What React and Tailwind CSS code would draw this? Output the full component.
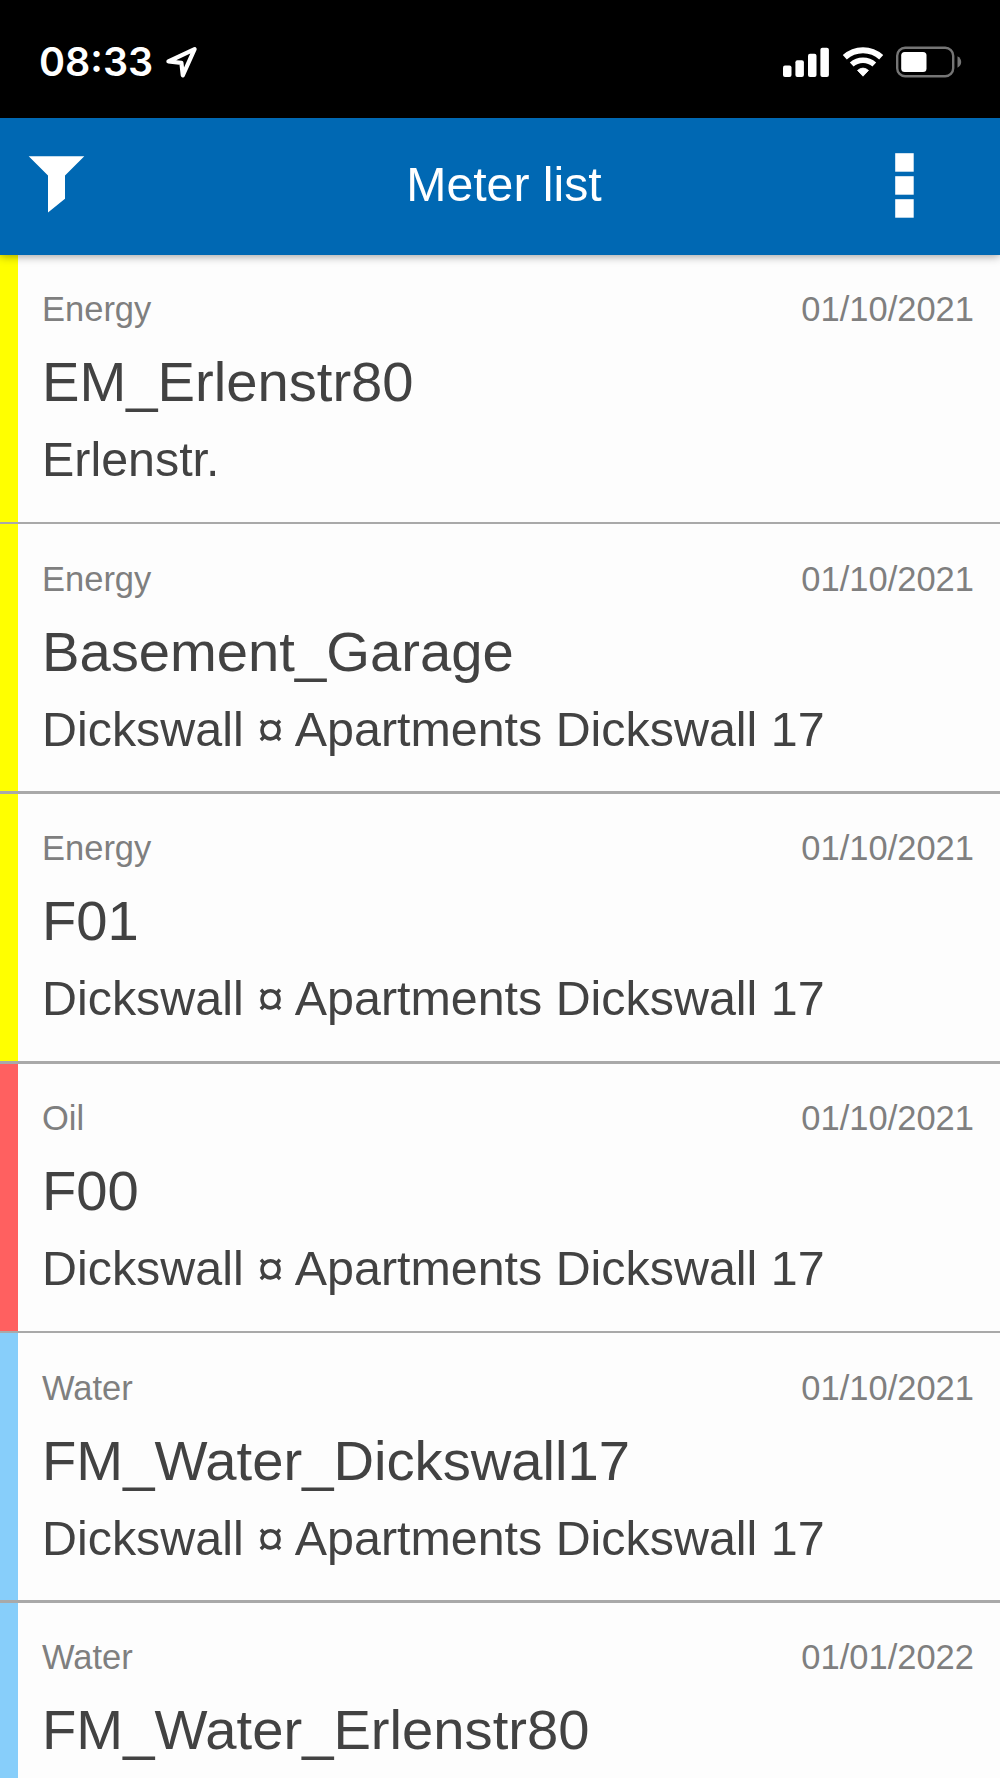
const meters = [
  { type: "Energy", date: "01/10/2021", name: "EM_Erlenstr80", place: "Erlenstr." },
  { type: "Energy", date: "01/10/2021", name: "Basement_Garage", place: "Dickswall ¤ Apartments Dickswall 17" },
  { type: "Energy", date: "01/10/2021", name: "F01", place: "Dickswall ¤ Apartments Dickswall 17" },
  { type: "Oil", date: "01/10/2021", name: "F00", place: "Dickswall ¤ Apartments Dickswall 17" },
  { type: "Water", date: "01/10/2021", name: "FM_Water_Dickswall17", place: "Dickswall ¤ Apartments Dickswall 17" },
  { type: "Water", date: "01/01/2022", name: "FM_Water_Erlenstr80", place: "" },
];

const stripe = {
  Energy: "bg-[#ffff00]",
  Oil: "bg-[#ff6060]",
  Water: "bg-[#87cefa]",
};

function StatusBar() {
  return (
    <div className="h-[118px] shrink-0 bg-black text-white flex items-center justify-between pl-[39px] pr-[38px] pt-[6px]">
      <div className="flex items-center gap-[12px]">
        <span className="font-['Inter',sans-serif] font-semibold text-[39.5px] leading-none w-[115px] pt-[2px]">08:33</span>
        <svg width="32" height="34" viewBox="0 0 32 34" fill="none" stroke="white" strokeWidth="4.2" strokeLinejoin="round">
          <path d="M2.4 16.5 L28.6 4.2 L16.8 30.3 L15.4 17.8 Z" />
        </svg>
      </div>
      <div className="flex items-center">
        <svg width="46" height="30" viewBox="0 0 46 30" fill="white">
          <rect x="0" y="18.5" width="8.5" height="11.5" rx="2" />
          <rect x="12.4" y="13.2" width="8.5" height="16.8" rx="2" />
          <rect x="25" y="6.8" width="8.5" height="23.2" rx="2" />
          <rect x="37.4" y="0.7" width="8.5" height="29.3" rx="2" />
        </svg>
        <svg className="ml-[13px]" width="42" height="30" viewBox="0 0 42 30" fill="none" stroke="white">
          <path d="M2.8 10.2 A27 27 0 0 1 39.2 10.2" strokeWidth="6" />
          <path d="M9.7 17.5 A17 17 0 0 1 32.3 17.5" strokeWidth="5.6" />
          <path d="M15.5 23.4 Q21 18.8 26.5 23.4 L21 29.2 Z" fill="white" strokeWidth="0.8" strokeLinejoin="round" />
        </svg>
        <svg className="ml-[12px]" width="66" height="32" viewBox="0 0 66 32">
          <rect x="1.2" y="1.7" width="56" height="28.6" rx="8" fill="none" stroke="#757575" strokeWidth="2.4" />
          <rect x="5.2" y="6" width="25.3" height="20" rx="3.5" fill="white" />
          <path d="M61.5 10.3 Q65.2 12.3 65.2 16 Q65.2 19.7 61.5 21.7 Z" fill="#757575" />
        </svg>
      </div>
    </div>
  );
}

function Header() {
  return (
    <header className="relative z-10 h-[136.5px] shrink-0 bg-[#0068b3] text-white flex items-center justify-between pl-[28px] pr-[86px] pb-[3px] shadow-[0_1px_9px_rgba(0,0,0,0.4)]">
      <svg className="w-[58px]" width="58" height="58" viewBox="0 0 58 58" fill="white">
        <path d="M0.7 0.3 H56.3 L37 19.6 V42.8 L20 56.6 V19.6 Z" />
      </svg>
      <h1 className="text-[48.2px] leading-none whitespace-nowrap ml-[27px] pb-[2px]">Meter list</h1>
      <svg width="19" height="66" viewBox="0 0 19 66" fill="white">
        <rect x="0.2" y="1.2" width="18.5" height="18.5" />
        <rect x="0.2" y="24.2" width="18.5" height="18.5" />
        <rect x="0.2" y="47.2" width="18.5" height="18.5" />
      </svg>
    </header>
  );
}

function MeterRow({ meter }) {
  return (
    <li className="h-[269.7px] shrink-0 flex flex-col">
      <div className="flex flex-1">
        <div className={`w-[18px] shrink-0 ${stripe[meter.type]}`} />
        <div className="flex-1 pl-[24px] pr-[26px] pt-[34.5px]">
          <div className="flex justify-between text-[34.5px] leading-[40px] text-[#7f7f7f]">
            <span>{meter.type}</span>
            <span>{meter.date}</span>
          </div>
          <div className="mt-[21px] text-[56.2px] leading-[64px] text-[#424242] whitespace-nowrap">{meter.name}</div>
          <div className="mt-[17px] text-[48.4px] leading-[56px] text-[#424242] whitespace-nowrap">{meter.place}</div>
        </div>
      </div>
      <div className="h-[2.6px] shrink-0 bg-[#a9a9a9]" />
    </li>
  );
}

export default function App() {
  return (
    <div className="w-[1000px] h-[1778px] overflow-hidden flex flex-col bg-[#fdfdfd] font-['Liberation_Sans',Arial,sans-serif]">
      <StatusBar />
      <Header />
      <ul className="flex flex-col">
        {meters.map((meter, i) => (
          <MeterRow key={i} meter={meter} />
        ))}
      </ul>
    </div>
  );
}
